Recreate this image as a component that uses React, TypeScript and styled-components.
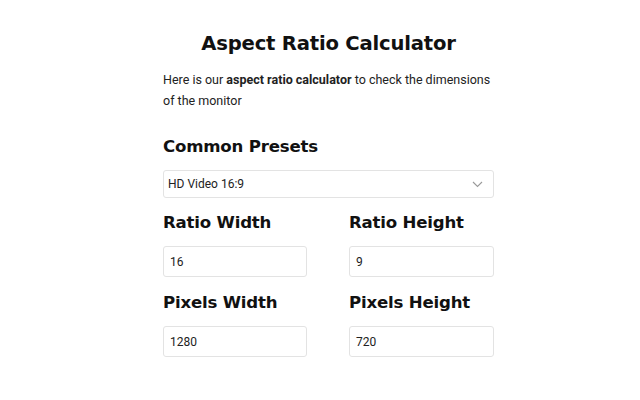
import styled, { createGlobalStyle } from "styled-components";

const GlobalStyle = createGlobalStyle`
  body {
    margin: 0;
    background: #fff;
    font-family: Roboto, "Liberation Sans", sans-serif;
    color: #1a1a1a;
  }
`;

const Wrapper = styled.div`
  padding: 30px 0 0 17px;
`;

const Page = styled.main`
  width: 331px;
  margin: 0 auto;
`;

const Title = styled.h1`
  margin: 0;
  text-align: center;
  font-family: "DejaVu Sans", sans-serif;
  font-weight: 700;
  font-size: 19.6px;
  line-height: 28px;
  letter-spacing: -0.2px;
  color: #111;
`;

const Intro = styled.p`
  margin: 11px 0 0;
  font-size: 12.5px;
  line-height: 21px;
  color: #222;
  & b {
    font-weight: 700;
  }
`;

const Heading = styled.h2`
  margin: 0 0 11px;
  font-family: "DejaVu Sans", sans-serif;
  font-weight: 700;
  font-size: 16.6px;
  line-height: 24px;
  letter-spacing: -0.2px;
  color: #111;
`;

const Section = styled.section`
  margin-top: 24px;
`;

const SelectBox = styled.div`
  display: flex;
  align-items: center;
  justify-content: space-between;
  height: 26px;
  padding: 0 10px 0 4px;
  border: 1px solid #e3e3e3;
  border-radius: 3px;
  font-size: 12px;
  color: #222;
`;

const Grid = styled.div`
  display: grid;
  grid-template-columns: 144px 145px;
  column-gap: 42px;
  row-gap: 14px;
  margin-top: 13px;
`;

const Field = styled.div`
  display: flex;
  flex-direction: column;
`;

const Input = styled.div`
  display: flex;
  align-items: center;
  height: 29px;
  padding: 0 6px;
  border: 1px solid #e3e3e3;
  border-radius: 3px;
  font-size: 12px;
  color: #222;
`;

const Chevron = () => (
  <svg width="11" height="7" viewBox="0 0 11 7" fill="none">
    <path d="M1 1l4.5 4.5L10 1" stroke="#9a9a9a" strokeWidth="1.1" />
  </svg>
);

const fields = [
  { label: "Ratio Width", value: "16" },
  { label: "Ratio Height", value: "9" },
  { label: "Pixels Width", value: "1280" },
  { label: "Pixels Height", value: "720" },
];

export default function App() {
  return (
    <>
      <GlobalStyle />
      <Wrapper>
        <Page>
          <Title>Aspect Ratio Calculator</Title>
          <Intro>
            Here is our <b>aspect ratio calculator</b> to check the dimensions
            of the monitor
          </Intro>
          <Section>
            <Heading>Common Presets</Heading>
            <SelectBox>
              <span>HD Video 16:9</span>
              <Chevron />
            </SelectBox>
          </Section>
          <Grid>
            {fields.map((f) => (
              <Field key={f.label}>
                <Heading>{f.label}</Heading>
                <Input>{f.value}</Input>
              </Field>
            ))}
          </Grid>
        </Page>
      </Wrapper>
    </>
  );
}
